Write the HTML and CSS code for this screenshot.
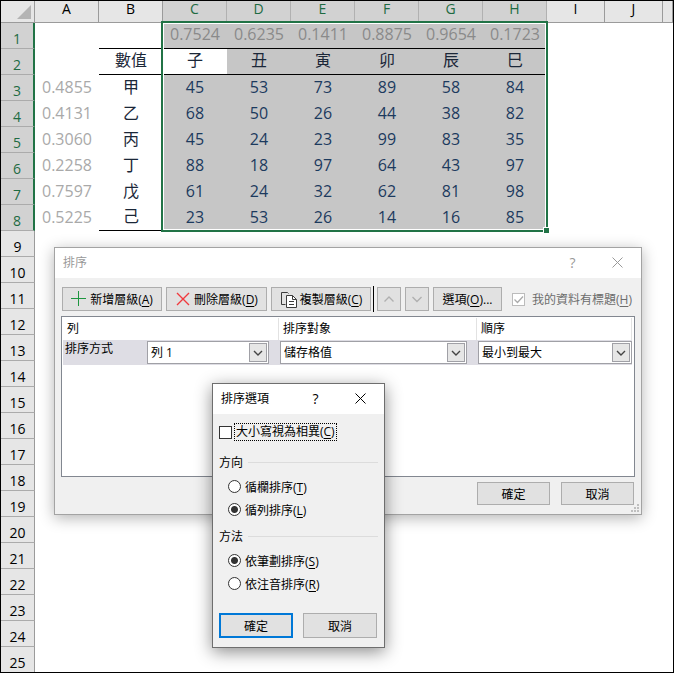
FILE: index.html
```
<!DOCTYPE html>
<html lang="zh-Hant">
<head>
  <meta charset="UTF-8" />
  <meta name="viewport" content="width=device-width, initial-scale=1.0"/>
  <title>排序</title>
  <link rel="stylesheet" href="styles.css">
</head>
<body>

  <main class="sheet">
    <table class="grid">
      <colgroup>
        <col class="col-head">
        <col span="8" class="col-data">
        <col span="2" class="col-wide">
        <col>
      </colgroup>
      <thead>
        <tr>
          <th class="corner"><svg width="14" height="14" viewBox="0 0 14 14"><path d="M14 0V14H0Z" fill="#b4b4b4"/></svg></th>
          <th>A</th><th>B</th>
          <th class="on">C</th><th class="on">D</th><th class="on">E</th><th class="on">F</th><th class="on">G</th><th class="on">H</th>
          <th>I</th><th>J</th><th></th>
        </tr>
      </thead>
      <tbody>
        <tr class="picked rand">
          <th>1</th><td></td><td class="line"></td>
          <td>0.7524</td><td>0.6235</td><td>0.1411</td><td>0.8875</td><td>0.9654</td><td>0.1723</td>
        </tr>
        <tr class="picked names">
          <th>2</th><td></td><td class="line">數值</td>
          <td class="active">子</td><td>丑</td><td>寅</td><td>卯</td><td>辰</td><td>巳</td>
        </tr>
        <tr class="picked">
          <th>3</th><td>0.4855</td><td>甲</td>
          <td>45</td><td>53</td><td>73</td><td>89</td><td>58</td><td>84</td>
        </tr>
        <tr class="picked">
          <th>4</th><td>0.4131</td><td>乙</td>
          <td>68</td><td>50</td><td>26</td><td>44</td><td>38</td><td>82</td>
        </tr>
        <tr class="picked">
          <th>5</th><td>0.3060</td><td>丙</td>
          <td>45</td><td>24</td><td>23</td><td>99</td><td>83</td><td>35</td>
        </tr>
        <tr class="picked">
          <th>6</th><td>0.2258</td><td>丁</td>
          <td>88</td><td>18</td><td>97</td><td>64</td><td>43</td><td>97</td>
        </tr>
        <tr class="picked">
          <th>7</th><td>0.7597</td><td>戊</td>
          <td>61</td><td>24</td><td>32</td><td>62</td><td>81</td><td>98</td>
        </tr>
        <tr class="picked">
          <th>8</th><td>0.5225</td><td class="line">己</td>
          <td>23</td><td>53</td><td>26</td><td>14</td><td>16</td><td>85</td>
        </tr>
        <tr><th>9</th></tr>
        <tr><th>10</th></tr>
        <tr><th>11</th></tr>
        <tr><th>12</th></tr>
        <tr><th>13</th></tr>
        <tr><th>14</th></tr>
        <tr><th>15</th></tr>
        <tr><th>16</th></tr>
        <tr><th>17</th></tr>
        <tr><th>18</th></tr>
        <tr><th>19</th></tr>
        <tr><th>20</th></tr>
        <tr><th>21</th></tr>
        <tr><th>22</th></tr>
        <tr><th>23</th></tr>
        <tr><th>24</th></tr>
        <tr><th>25</th></tr>
      </tbody>
    </table>
    <div class="selection"><span class="handle"></span></div>

    <section class="dialog sort-dialog" aria-label="排序">
      <header class="title-bar">
        <h2>排序</h2>
        <button class="title-btn" aria-label="說明">?</button>
        <button class="title-btn" aria-label="關閉"><svg width="11" height="11" viewBox="0 0 11 11"><path d="M.5 .5l10 10M10.5 .5l-10 10" stroke="currentColor" fill="none"/></svg></button>
      </header>
      <div class="sort-body">
        <div class="toolbar">
          <button class="btn tool">
            <svg class="icon-add" width="16" height="16" viewBox="0 0 16 16"><path d="M7.5 0v15M0 7.5h15"/></svg>
            <span>新增層級(<u>A</u>)</span>
          </button>
          <button class="btn tool tool-delete">
            <svg class="icon-delete" width="16" height="16" viewBox="0 0 16 16"><path d="M2 2l12 12M14 2l-12 12"/></svg>
            <span>刪除層級(<u>D</u>)</span>
          </button>
          <button class="btn tool">
            <svg width="17" height="17" viewBox="0 0 17 17"><g fill="none" stroke="#3b3b3b"><path d="M5.5 13.5h-4v-12h6l1 1"/><path d="M6.5 4.500h6l4 4v8h-10z" fill="#fff"/><path d="M12.500 4.500v4h4M9 10.500h5M9 13.500h5"/></g></svg>
            <span>複製層級(<u>C</u>)</span>
          </button>
          <span class="divider"></span>
          <button class="btn arrow" aria-label="上移" disabled><svg width="12" height="12" viewBox="0 0 12 12"><path d="M1.5 8.5L6 4l4.5 4.500" stroke="currentColor" stroke-width="1.4" fill="none"/></svg></button>
          <button class="btn arrow" aria-label="下移" disabled><svg width="12" height="12" viewBox="0 0 12 12"><path d="M1.5 4L6 8.5 10.500 4" stroke="currentColor" stroke-width="1.4" fill="none"/></svg></button>
          <button class="btn options">選項(<u>O</u>)...</button>
          <label class="check has-header"><input type="checkbox" checked disabled><span>我的資料有標題(<u>H</u>)</span></label>
        </div>

        <div class="levels">
          <div class="level-row level-head">
            <span>列</span><span>排序對象</span><span>順序</span>
          </div>
          <div class="level-row level-item">
            <div class="field">
              <label for="sort-by">排序方式</label>
              <div class="combo">
                <select id="sort-by"><option>列 1</option></select>
                <svg viewBox="0 0 16 17"><path d="M4 7l4 4 4-4"/></svg>
              </div>
            </div>
            <div class="combo">
              <select aria-label="排序對象"><option>儲存格值</option></select>
              <svg viewBox="0 0 16 17"><path d="M4 7l4 4 4-4"/></svg>
            </div>
            <div class="combo">
              <select aria-label="順序"><option>最小到最大</option></select>
              <svg viewBox="0 0 16 17"><path d="M4 7l4 4 4-4"/></svg>
            </div>
          </div>
        </div>

        <footer class="sort-actions">
          <button class="btn">確定</button>
          <button class="btn">取消</button>
        </footer>
      </div>
      <svg class="grip" width="8" height="8" viewBox="0 0 8 8"><path d="M6 0h2v2h-2zM3 3h2v2h-2zM6 3h2v2h-2zM0 6h2v2h-2zM3 6h2v2h-2zM6 6h2v2h-2z" fill="#bfbfbf"/></svg>
    </section>

    <section class="dialog options-dialog" aria-label="排序選項">
      <header class="title-bar">
        <h2>排序選項</h2>
        <button class="title-btn" aria-label="說明">?</button>
        <button class="title-btn" aria-label="關閉"><svg width="11" height="11" viewBox="0 0 11 11"><path d="M.5 .5l10 10M10.5 .5l-10 10" stroke="currentColor" fill="none"/></svg></button>
      </header>
      <div class="options-body">
        <label class="check focused"><input type="checkbox"><span>大小寫視為相異(<u>C</u>)</span></label>
        <fieldset>
          <legend><span>方向</span></legend>
          <label class="radio"><input type="radio" name="direction"><span>循欄排序(<u>T</u>)</span></label>
          <label class="radio"><input type="radio" name="direction" checked><span>循列排序(<u>L</u>)</span></label>
        </fieldset>
        <fieldset>
          <legend><span>方法</span></legend>
          <label class="radio"><input type="radio" name="method" checked><span>依筆劃排序(<u>S</u>)</span></label>
          <label class="radio"><input type="radio" name="method"><span>依注音排序(<u>R</u>)</span></label>
        </fieldset>
        <footer class="options-actions">
          <button class="btn primary">確定</button>
          <button class="btn">取消</button>
        </footer>
      </div>
    </section>
  </main>

</body>
</html>
```
FILE: styles.css
```
* { box-sizing: border-box; margin: 0; padding: 0; }

body {
  font-family: "Open Sans", "Noto Sans CJK TC", sans-serif;
  font-size: 12px;
  color: #000;
  background-color: #fff;
}

button, select, input { font: inherit; color: inherit; }

svg { display: block; flex: none; }

u { text-underline-offset: 2px; }

.sheet {
  position: relative;
  height: 100vh;
  border: 1px solid #000;
  overflow: hidden;
}

/* 工作表 */
.grid {
  width: 100%;
  table-layout: fixed;
  border-collapse: separate;
  border-spacing: 0;
}

.col-head { width: 34px; }
.col-data { width: 64px; }
.col-wide { width: 58px; }

.grid th {
  font-size: 14px;
  font-weight: 400;
  line-height: 16px;
  background-color: #e6e6e6;
  border-right: 1px solid #9b9b9b;
}

.grid thead th {
  height: 22px;
  padding-bottom: 5px;
  border-bottom: 1px solid #9b9b9b;
}

.grid thead th.on {
  color: #1e6b42;
  background-color: #d2d2d2;
  border-right-color: #b1b1b1;
}

.grid thead .corner {
  padding: 4px 3px 3px 16px;
}

.grid tbody th {
  height: 26px;
  padding-bottom: 1px;
  vertical-align: bottom;
  border-bottom: 1px solid #ababab;
}

.grid .picked th {
  color: #1e6b42;
  background-color: #d2d2d2;
  border-right: 2px solid #217346;
}

.grid td {
  height: 26px;
  padding-bottom: 2px;
  font-size: 16px;
  line-height: 23px;
  text-align: center;
  color: #1c3a5e;
}

.grid td:nth-child(2) { color: #a9a9a9; }
.grid td:nth-child(3) { color: #1b2738; }
.grid td:nth-child(n+4) { background-color: #c6c6c6; }
.grid .rand td { color: #8a8a8a; }
.grid .names td { color: #1b2738; }
.grid .names .active { background-color: #fff; }

.grid .line,
.grid .rand td:nth-child(n+4),
.grid .names td:nth-child(n+4) {
  border-bottom: 1px solid #000;
}

.selection {
  position: absolute;
  left: 160px;
  top: 20px;
  width: 387px;
  height: 211px;
  border: 2px solid #217346;
  box-shadow: inset 0 0 0 1px #fff;
}

.handle {
  position: absolute;
  right: -4px;
  bottom: -4px;
  width: 7px;
  height: 7px;
  background-color: #217346;
  border: 1px solid #fff;
}

/* 對話方塊 */
.dialog {
  position: absolute;
  background-color: #f0f0f0;
  white-space: nowrap;
}

.title-bar {
  display: flex;
  align-items: center;
  height: 30px;
  padding: 0 1px 0 8px;
  background-color: #fff;
}

.title-bar h2 {
  flex: 1;
  font-size: 12px;
  font-weight: 400;
  line-height: 16px;
  padding-bottom: 1px;
}

.title-btn {
  display: flex;
  align-items: center;
  justify-content: center;
  width: 45px;
  height: 30px;
  padding-bottom: 2px;
  font-size: 14px;
  background: none;
  border: none;
}

.btn {
  display: flex;
  align-items: center;
  justify-content: center;
  height: 24px;
  background-color: #e1e1e1;
  border: 1px solid #adadad;
}

.check, .radio {
  display: flex;
  align-items: center;
}

.check input, .radio input {
  appearance: none;
  flex: none;
  width: 13px;
  height: 13px;
  background-color: #fff;
  border: 1px solid #333;
}

.radio input { border-radius: 50%; }

.radio input:checked {
  background-image: radial-gradient(circle, #333 3px, transparent 4px);
}

.sort-dialog {
  left: 53px;
  top: 246px;
  width: 588px;
  border: 1px solid #a3a3a3;
  box-shadow: 0 3px 14px rgba(0,0,0,0.3);
}

.sort-dialog .title-bar { color: #999; }

.sort-body { padding: 8px 6px 9px; }

.toolbar {
  display: flex;
  align-items: center;
  gap: 4px;
  height: 26px;
  padding-left: 1px;
}

.tool {
  gap: 3px;
  width: 100px;
}

.tool-delete { width: 101px; }

.icon-add, .icon-delete {
  fill: none;
  stroke-width: 1;
}

.icon-add { stroke: #1e9640; }

.icon-delete {
  stroke: #f03a3e;
  stroke-width: 1.4;
}

.divider {
  width: 1px;
  height: 26px;
  margin: 0 -1px 0 -2px;
  background-color: #000;
}

.arrow {
  width: 24px;
  color: #b0b0b0;
}

.options { width: 69px; }

.has-header {
  gap: 7px;
  margin-left: 6px;
  color: #6d6d6d;
}

.has-header input {
  border-color: #bcbcbc;
  background: #fff url("data:image/svg+xml,%3Csvg xmlns='http://www.w3.org/2000/svg' viewBox='0 0 11 11'%3E%3Cpath d='M1.5 5.5l3 3 5.5-6' fill='none' stroke='%23aaa' stroke-width='1.3'/%3E%3C/svg%3E");
}

.levels {
  height: 161px;
  margin-top: 4px;
  padding: 1px 2px 1px 1px;
  background-color: #fff;
  border: 1px solid #828790;
}

.level-row {
  display: grid;
  grid-template-columns: 216px 198px 1fr;
}

.level-head {
  height: 22px;
  line-height: 22px;
}

.level-head span {
  padding-left: 4px;
  border-right: 1px solid #e2e2e2;
}

.level-item {
  height: 25px;
  padding-top: 1px;
  background-color: #dedde4;
}

.level-item > .combo { margin-left: 1px; }
.level-item > .combo:nth-child(2) { margin-right: 10px; }

.field {
  display: flex;
  justify-content: space-between;
  padding: 0 10px 0 2px;
}

.field label { line-height: 16px; }
.field .combo { width: 122px; }

.combo {
  position: relative;
  height: 23px;
}

.combo select {
  appearance: none;
  width: 100%;
  height: 100%;
  padding: 0 22px 1px 3px;
  background-color: #fff;
  border: 1px solid #a0a0a6;
  border-radius: 0;
}

.combo svg {
  position: absolute;
  top: 2px;
  right: 2px;
  width: 18px;
  height: 19px;
  fill: none;
  stroke: #444;
  stroke-width: 1.4;
  background-color: #e6e6e6;
  border: 1px solid #a0a0a6;
  pointer-events: none;
}

.sort-actions {
  display: flex;
  justify-content: flex-end;
  gap: 11px;
  padding: 5px 1px 0 0;
}

.sort-actions .btn {
  width: 73px;
  height: 23px;
}

.grip {
  position: absolute;
  right: 2px;
  bottom: 2px;
}

.options-dialog {
  left: 211px;
  top: 382px;
  width: 173px;
  border: 1px solid #6e6e6e;
  box-shadow: 0 4px 16px rgba(0,0,0,0.45);
}

.options-body { padding: 9px 6px; }

.focused {
  gap: 2px;
}

.focused span {
  padding: 0 1px;
  line-height: 16px;
  border: 1px dotted #000;
}

fieldset { border: none; }

.focused + fieldset { margin-top: 11px; }
fieldset + fieldset { margin-top: 5px; }

legend {
  display: flex;
  align-items: center;
  gap: 5px;
  width: 100%;
  height: 20px;
  margin-bottom: 3px;
}

legend::after {
  content: "";
  flex: 1;
  height: 1px;
  background-color: #dcdcdc;
}

.radio {
  gap: 4px;
  height: 23px;
  padding-left: 9px;
}

.options-actions {
  display: flex;
  gap: 10px;
  margin-top: 18px;
}

.options-actions .btn {
  width: 74px;
  height: 25px;
}

.options-actions .primary { border: 2px solid #0078d7; }
```
